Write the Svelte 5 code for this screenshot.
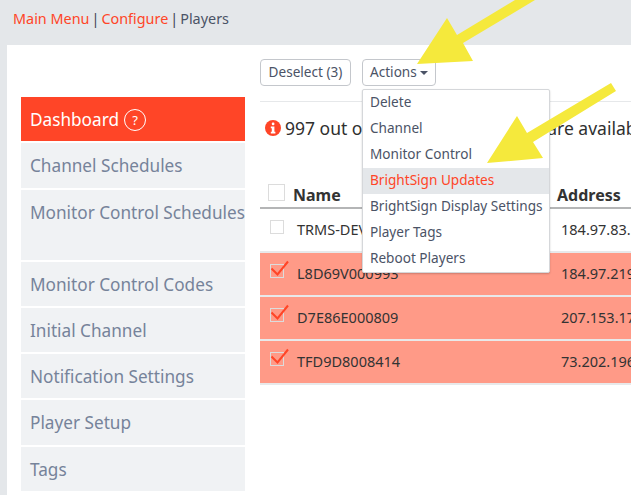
<script>
  const side = [
    { label: 'Channel Schedules', cls: 'mid' },
    { label: 'Monitor Control Schedules', cls: 'tall' },
    { label: 'Monitor Control Codes', cls: '' },
    { label: 'Initial Channel', cls: '' },
    { label: 'Notification Settings', cls: '' },
    { label: 'Player Setup', cls: 'mid' },
    { label: 'Tags', cls: '' }
  ];
  const menu = ['Delete', 'Channel', 'Monitor Control', 'BrightSign Updates', 'BrightSign Display Settings', 'Player Tags', 'Reboot Players'];
  const rows = [
    { name: 'TRMS-DEV', addr: '184.97.83.117', on: false },
    { name: 'L8D69V000993', addr: '184.97.219.46', on: true },
    { name: 'D7E86E000809', addr: '207.153.17.20', on: true },
    { name: 'TFD9D8008414', addr: '73.202.196.11', on: true }
  ];
</script>

<div class="page">
  <nav class="crumbs"><a href="#m">Main Menu</a><i>|</i><a href="#c">Configure</a><i>|</i><span>Players</span></nav>
  <div class="panel">
    <aside class="side">
      <div class="item active">Dashboard <span class="help">?</span></div>
      {#each side as s}
        <div class="item {s.cls}">{s.label}</div>
      {/each}
    </aside>
    <main class="content">
      <div class="toolbar">
        <button class="btn first">Deselect (3)</button>
        <div class="dd">
          <button class="btn">Actions <i class="caret"></i></button>
          <ul class="menu">
            {#each menu as m, i}
              <li class:hot={i === 3}>{m}</li>
            {/each}
          </ul>
        </div>
      </div>
      <div class="notice">
        <svg class="info" viewBox="0 0 16 16" width="16" height="16">
          <circle cx="8" cy="8" r="8" fill="#ff4527" />
          <rect x="6.8" y="2.6" width="2.6" height="2.6" rx="1" fill="#fff" />
          <path d="M5.8 6.6h3.6v5.2h1v1.6H5.8v-1.6h1V8.2h-1z" fill="#fff" />
        </svg>
        <span>997 out of 1,000 player licenses are available</span>
      </div>
      <div class="table">
        <div class="row head">
          <span class="box big"></span><b class="name">Name</b><b class="addr">Address</b>
        </div>
        {#each rows as r}
          <div class="row" class:on={r.on}>
            <span class="box">
              {#if r.on}
                <svg class="check" viewBox="0 0 20 18" width="20" height="18"><path d="M1.5 8.5 7.5 14.5 18 1.5" fill="none" stroke="#ff4527" stroke-width="2" /></svg>
              {/if}
            </span>
            <span class="name">{r.name}</span><span class="addr">{r.addr}</span>
          </div>
        {/each}
      </div>
    </main>
  </div>
  <svg class="arrows" width="631" height="495" viewBox="0 0 631 495">
    <path d="M515 0 457 35 447 18 417 64 473 61 463 43 535 0Z" fill="#f5e93c" />
    <path d="M611 83 527 133 517 116 487 163 543 158 533 142 616 91Z" fill="#f5e93c" />
  </svg>
</div>

<style>
  :global(body) { margin: 0; background: #e4e7ea; }
  .page {
    position: relative;
    width: 631px;
    height: 495px;
    overflow: hidden;
    background: #e4e7ea;
    font-family: "Noto Sans", "Open Sans", sans-serif;
    color: #4b5366;
  }
  .crumbs { height: 45px; box-sizing: border-box; padding: 9px 0 0 13px; display: flex; gap: 2px; font-size: 14.4px; line-height: 19px; }
  .crumbs a { color: #ff4527; text-decoration: none; }
  .crumbs i { font-style: normal; color: #3e4452; }
  .crumbs span { color: #4b5366; }
  .panel { margin-left: 7px; height: 450px; background: #fff; display: flex; }
  .side { width: 224px; margin: 52px 15px 0 14px; flex: none; display: flex; flex-direction: column; gap: 2px; }
  .item {
    height: 44px;
    flex: none;
    box-sizing: border-box;
    padding: 1px 0 0 9px;
    background: #f0f2f4;
    color: #76839a;
    font-size: 17.2px;
    line-height: 44px;
    white-space: nowrap;
  }
  .item.mid { height: 45px; }
  .item.tall { height: 70px; }
  .item.active { background: #ff4527; color: #fff; display: flex; align-items: center; gap: 5px; }
  .help {
    width: 20px; height: 20px; border: 1px solid #fff; border-radius: 50%;
    font-size: 13px; line-height: 20px; text-align: center;
  }
  .content { flex: 1; min-width: 0; overflow: hidden; }
  .toolbar { display: flex; gap: 11px; padding-top: 14px; height: 42px; border-bottom: 1px solid #e6e8ea; }
  .btn {
    height: 27px; padding: 0 7px 2px; box-sizing: border-box;
    background: #fff; border: 1px solid #c4c7cc; border-radius: 4px;
    font: inherit; font-size: 13.6px; color: #4b5366; white-space: nowrap;
  }
  .btn.first { width: 91px; }
  .caret {
    display: inline-block; width: 0; height: 0; vertical-align: 2px;
    border: 4px solid transparent; border-top-color: #4b5366; border-bottom: 0;
  }
  .dd { position: relative; }
  .menu {
    position: absolute; z-index: 2; top: 30px; left: 0; width: 188px; box-sizing: border-box;
    margin: 0; padding: 0; list-style: none; background: #fff;
    border: 1px solid #d5d7da; border-radius: 2px; box-shadow: 0 1px 2px rgba(0,0,0,.2);
  }
  .menu li { height: 26px; line-height: 24px; padding-left: 7px; font-size: 13.6px; white-space: nowrap; }
  .menu li.hot { background: #e4e7ea; color: #ff4527; }
  .notice { display: flex; align-items: center; gap: 4px; height: 52px; padding-left: 5px; font-size: 17.5px; color: #2f2f2f; white-space: nowrap; }
  .info { flex: none; }
  .table { margin-top: 24px; }
  .row { display: flex; align-items: center; height: 44px; padding-bottom: 2px; box-sizing: border-box; border-bottom: 2px solid #e8e9ea; font-size: 14.5px; color: #333; white-space: nowrap; }
  .row.on { background: #ff9a87; }
  .row.head { height: 31px; padding-bottom: 0; align-items: flex-start; border-bottom: 2px solid #b4b5b6; font-size: 16px; line-height: 22px; }
  .row.head b { margin-top: 6px; }
  .box { flex: none; width: 14px; height: 14px; margin: 0 13px 4px 10px; border: 1px solid #dcdcdc; box-sizing: border-box; position: relative; }
  .box.big { width: 17px; height: 17px; margin: 6px 8px 0 8px; }
  .name { width: 264px; flex: none; }
  .addr { flex: none; }
  .check { position: absolute; left: -1px; top: -5px; }
  .arrows { position: absolute; left: 0; top: 0; z-index: 3; pointer-events: none; }
</style>
